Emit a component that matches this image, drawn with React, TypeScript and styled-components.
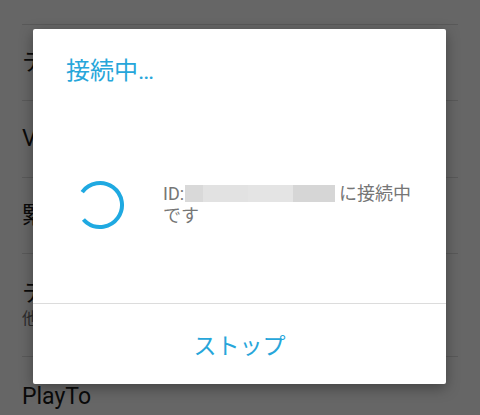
import React from 'react'
import styled, { createGlobalStyle } from 'styled-components'

const GlobalStyle = createGlobalStyle`
  html, body {
    margin: 0;
    padding: 0;
    background: #ffffff;
    font-family: Roboto, "Noto Sans CJK JP", sans-serif;
  }
`

const Screen = styled.div`
  position: relative;
  width: 480px;
  height: 415px;
  overflow: hidden;
  background: #ffffff;
`

const List = styled.div`
  display: flex;
  flex-direction: column;
  padding: 0 22px;
`

const Item = styled.div<{ h: number }>`
  height: ${p => p.h}px;
  flex: none;
  display: flex;
  flex-direction: column;
  justify-content: center;
  border-bottom: 1px solid #dedede;
  box-sizing: border-box;
`

const ItemTitle = styled.div`
  font-size: 23px;
  line-height: 28px;
  color: #1a1a1a;
  white-space: nowrap;
`

const ItemSub = styled.div`
  font-size: 16px;
  line-height: 22px;
  color: #6e6e6e;
  white-space: nowrap;
`

const Scrim = styled.div`
  position: absolute;
  inset: 0;
  background: rgba(0, 0, 0, 0.6);
`

const Dialog = styled.div`
  position: absolute;
  left: 33px;
  top: 29px;
  width: 413px;
  height: 355px;
  background: #ffffff;
  border-radius: 2px;
  box-shadow: 0 4px 14px rgba(0, 0, 0, 0.35);
  display: flex;
  flex-direction: column;
  font-family: Roboto, "Noto Sans CJK JP", sans-serif;
`

const Title = styled.div`
  padding: 26px 33px 0;
  font-size: 24px;
  line-height: 32px;
  color: #27a6da;
`

const Body = styled.div`
  flex: 1;
  display: flex;
  align-items: center;
  gap: 38px;
  padding: 0 30px 0 42px;
  margin-top: 20px;
`

const Spinner = styled.svg`
  flex: none;
  width: 50px;
  height: 50px;
`

const Message = styled.div`
  font-size: 18px;
  line-height: 22px;
  color: #767676;
`

const Redacted = styled.span`
  display: inline-block;
  width: 150px;
  height: 17px;
  vertical-align: -2px;
  margin: 0 4px 0 1px;
  background: linear-gradient(
    90deg,
    #d9d9d9 0 12%,
    #e2e2e2 12% 42%,
    #e4e4e4 42% 72%,
    #d6d6d6 72% 100%
  );
`

const Divider = styled.div`
  height: 1px;
  background: #dcdcdc;
`

const Action = styled.button`
  height: 80px;
  border: none;
  background: transparent;
  font-family: Roboto, "Noto Sans CJK JP", sans-serif;
  font-size: 23px;
  color: #27a6da;
  cursor: pointer;
`

const rows = [
  { h: 25, title: '' },
  { h: 76, title: 'テザリング' },
  { h: 77, title: 'VPN' },
  { h: 76, title: '緊急速報メール' },
  { h: 103, title: 'テレビ出力', sub: '他の端末と接続を共有' },
  { h: 80, title: 'PlayTo' }
]

const App: React.FC = () => {
  return (
    <Screen>
      <GlobalStyle />

      <List>
        {rows.map((row, i) => (
          <Item key={i} h={row.h}>
            {row.title && <ItemTitle>{row.title}</ItemTitle>}
            {row.sub && <ItemSub>{row.sub}</ItemSub>}
          </Item>
        ))}
      </List>

      <Scrim />

      <Dialog>
        <Title>接続中…</Title>

        <Body>
          <Spinner viewBox="0 0 50 50">
            <circle
              cx="25"
              cy="25"
              r="22"
              fill="none"
              stroke="#1fa9e1"
              strokeWidth="4"
              strokeDasharray="108 30"
              transform="rotate(216 25 25)"
            />
          </Spinner>
          <Message>
            ID:<Redacted />に接続中
            <br />
            です
          </Message>
        </Body>

        <Divider />
        <Action>ストップ</Action>
      </Dialog>
    </Screen>
  )
}

export default App
